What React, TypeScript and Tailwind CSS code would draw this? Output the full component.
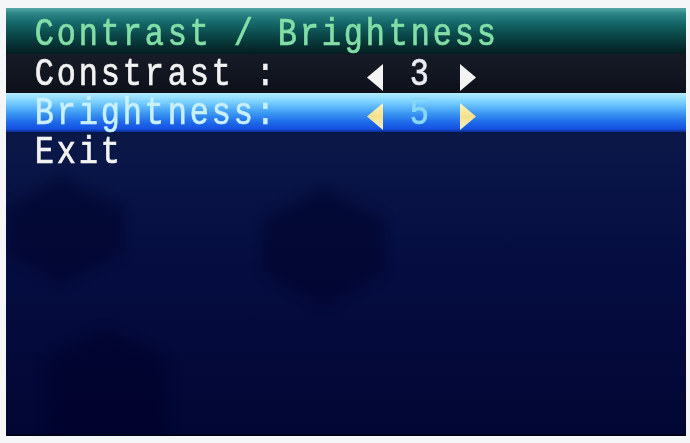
import React from "react";

function LeftArrow({ fill }: { fill: string }) {
  return (
    <svg width="22" height="29" viewBox="0 0 22 29" className="block">
      <polygon points="3,14.5 19,1 19,28" fill={fill} />
    </svg>
  );
}

function RightArrow({ fill }: { fill: string }) {
  return (
    <svg width="22" height="29" viewBox="0 0 22 29" className="block">
      <polygon points="5,1 21,14.5 5,28" fill={fill} />
    </svg>
  );
}

function T({ children }: { children: string }) {
  return (
    <span className="inline-flex whitespace-pre">
      {children.split("").map((ch, i) => (
        <span key={i} className="inline-block w-[22.1px] text-center">
          <span className="inline-block scale-x-[0.84] origin-center [-webkit-text-stroke:0.7px_currentColor]">
            {ch === " " ? "\u00a0" : ch}
          </span>
        </span>
      ))}
    </span>
  );
}

function Row({
  label,
  value,
  selected,
}: {
  label: string;
  value: string;
  selected?: boolean;
}) {
  const textColor = selected ? "text-[#c8f0ff]" : "text-[#f2f2f2]";
  const arrow = selected ? "url(#yel)" : "#f4f4f4";
  const valueColor = selected ? "text-[#86d8f4]" : "text-[#ececf4]";
  return (
    <div className="flex items-center h-full pl-[27px]">
      <span className={`w-[331px] ${textColor}`}>
        <T>{label}</T>
      </span>
      <span className="w-[22px] flex justify-center pt-[5px]">
        <LeftArrow fill={arrow} />
      </span>
      <span className="w-[22px]" />
      <span className={`w-[22px] flex justify-center ${valueColor}`}>
        <T>{value}</T>
      </span>
      <span className="w-[25px]" />
      <span className="w-[22px] flex justify-center pt-[5px]">
        <RightArrow fill={arrow} />
      </span>
    </div>
  );
}

export default function App() {
  return (
    <div className="w-[690px] h-[443px] bg-[#f4f6f8] pt-[8px] pl-[6px] pr-[4px] pb-[7px]">
      <svg width="0" height="0" className="absolute">
        <defs>
          <linearGradient id="yel" x1="0" y1="0" x2="0" y2="1">
            <stop offset="0" stopColor="#fff6c0" />
            <stop offset="0.5" stopColor="#f6e08a" />
            <stop offset="1" stopColor="#f0f0d0" />
          </linearGradient>
        </defs>
      </svg>
      <div
        className="relative w-full h-full overflow-hidden flex flex-col bg-[linear-gradient(to_bottom,#0b1a40_0%,#0a1848_30%,#050d40_60%,#020634_100%)] border-b-[2px] border-[#01031a] text-[38px] leading-none"
        style={{ fontFamily: '"Liberation Mono", "DejaVu Sans Mono", monospace' }}
      >
        <svg
          className="absolute inset-0 pointer-events-none"
          width="680"
          height="428"
          viewBox="0 0 680 428"
        >
          <defs>
            <filter id="bl" x="-20%" y="-20%" width="140%" height="140%">
              <feGaussianBlur stdDeviation="6" />
            </filter>
          </defs>
          <g filter="url(#bl)" fill="#020628" opacity="0.45">
            <polygon points="55,170 118,200 118,245 55,275 0,245 0,200" />
            <polygon points="318,180 378,210 378,265 318,300 258,265 258,210" />
            <polygon points="100,320 162,350 162,430 100,440 40,430 40,350" />
          </g>
        </svg>

        <div className="relative h-[46px] shrink-0 bg-[linear-gradient(to_bottom,#5aa8a8_0%,#2b8486_12%,#136466_35%,#0b4748_60%,#062c2e_85%,#041c1e_100%)] flex items-center pl-[27px] pt-[8px] text-[#82dea6]">
          <T>Contrast / Brightness</T>
        </div>

        <div className="relative h-[39px] shrink-0 bg-[linear-gradient(to_bottom,#171b27_0%,#121620_50%,#0d1019_100%)] pt-[3px]">
          <Row label="Constrast :" value="3" />
        </div>

        <div className="relative h-[39px] shrink-0 bg-[linear-gradient(to_bottom,#b4ecff_0%,#7cd2ff_22%,#3f9cf4_50%,#1f6aea_75%,#1552e2_92%,#0b2c8a_100%)] pt-[3px]">
          <Row label="Brightness:" value="5" selected />
        </div>

        <div className="relative h-[38px] shrink-0 flex items-center pl-[27px] pt-[4px] text-[#f2f2f2]">
          <T>Exit</T>
        </div>
      </div>
    </div>
  );
}
